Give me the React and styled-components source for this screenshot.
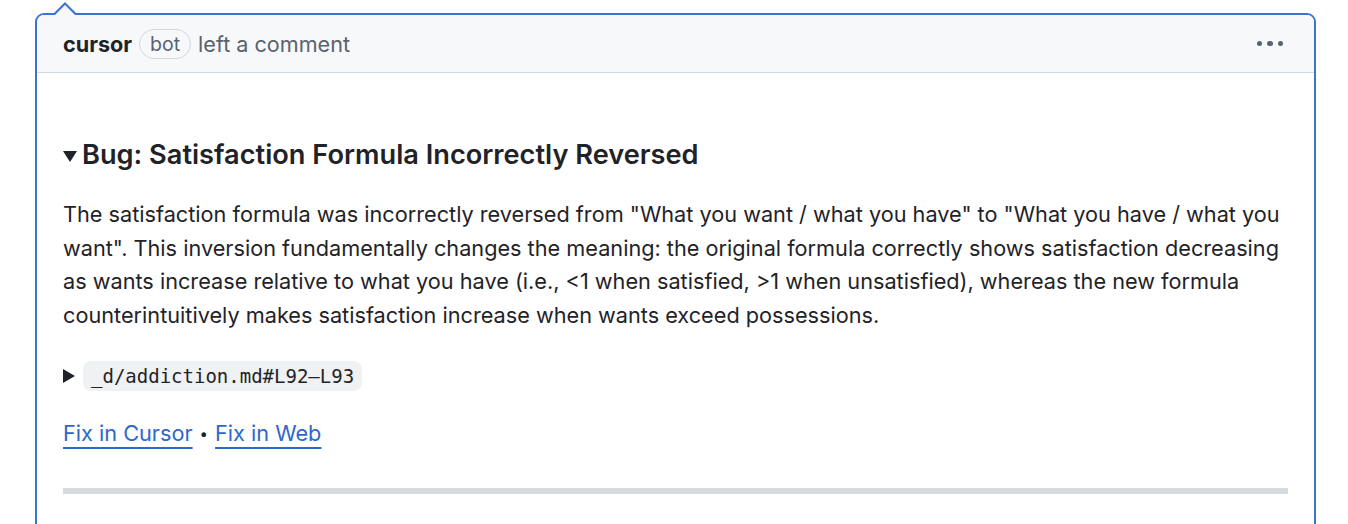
import React from "react";
import styled, { createGlobalStyle } from "styled-components";

const Global = createGlobalStyle`
  html, body { margin: 0; padding: 0; background: #ffffff; }
  body { font-family: Inter, "Noto Sans", sans-serif; color: #1f2328; }
`;

const Page = styled.div`
  padding: 13px 32px 0 35px;
  height: 524px;
  box-sizing: border-box;
  overflow: hidden;
`;

const Card = styled.div`
  position: relative;
  border: 2px solid #3e72d2;
  border-bottom: none;
  border-radius: 9px 9px 0 0;
  background: #ffffff;
  height: 600px;
  &::before, &::after {
    content: "";
    position: absolute;
    left: 17px;
    width: 0; height: 0;
    border-left: 11px solid transparent;
    border-right: 11px solid transparent;
  }
  &::before { top: -13px; border-bottom: 11px solid #3e72d2; }
  &::after { top: -10px; border-bottom: 11px solid #f6f8fa; left: 17px; }
`;

const Header = styled.div`
  display: flex;
  align-items: center;
  height: 57px;
  padding: 0 31px 0 26px;
  background: #f6f8fa;
  border-bottom: 1px solid #d1d9e0;
  border-radius: 7px 7px 0 0;
  font-size: 21.6px;
`;

const Author = styled.span`
  font-weight: 700;
  color: #1f2328;
`;

const Badge = styled.span`
  margin: 1px 7px 0 7px;
  padding: 0 10px;
  height: 30px;
  line-height: 29px;
  box-sizing: border-box;
  border: 1px solid #d1d9e0;
  border-radius: 15px;
  font-size: 19.5px;
  color: #59636e;
`;

const Meta = styled.span`
  color: #59636e;
  flex: 1;
`;

const Dots = styled.div`
  display: flex;
  gap: 5px;
  span { width: 5.5px; height: 5.5px; border-radius: 50%; background: #59636e; }
`;

const Body = styled.div`
  padding: 64px 26px 0 26px;
  font-size: 21.7px;
  line-height: 33.6px;
`;

const Title = styled.h3`
  margin: 0 0 25px;
  font-size: 27.2px;
  font-weight: 600;
  line-height: 36px;
  display: flex;
  align-items: center;
  gap: 5px;
`;

const Caret = styled.span`
  display: inline-block;
  width: 0; height: 0;
  border-left: ${p => (p.open ? "7px solid transparent" : "12px solid #1f2328")};
  border-right: ${p => (p.open ? "7px solid transparent" : "none")};
  border-top: ${p => (p.open ? "11px solid #1f2328" : "7px solid transparent")};
  border-bottom: ${p => (p.open ? "none" : "7px solid transparent")};
  margin-top: ${p => (p.open ? "3px" : "0")};
`;

const Para = styled.p`
  margin: 0 0 29px;
`;

const Summary = styled.div`
  display: flex;
  align-items: center;
  gap: 8px;
  margin-bottom: 26px;
`;

const Code = styled.code`
  font-family: "DejaVu Sans Mono", "Liberation Mono", monospace;
  font-size: 19px;
  background: #eff1f3;
  border-radius: 8px;
  padding: 0 8px;
  line-height: 30px;
`;

const Links = styled.div`
  display: flex;
  align-items: center;
  gap: 7px;
`;

const Link = styled.a`
  color: #2f67c9;
  text-decoration: underline;
  text-underline-offset: 6px;
  text-decoration-thickness: 2px;
`;

const Sep = styled.span`
  font-size: 15px;
  color: #1f2328;
`;

const Rule = styled.div`
  margin-top: 37px;
  height: 6px;
  background: #d5dadf;
`;

export default function App() {
  return (
    <Page>
      <Global />
      <Card>
        <Header>
          <Author>cursor</Author>
          <Badge>bot</Badge>
          <Meta>left a comment</Meta>
          <Dots><span /><span /><span /></Dots>
        </Header>
        <Body>
          <Title><Caret open />Bug: Satisfaction Formula Incorrectly Reversed</Title>
          <Para>
            The satisfaction formula was incorrectly reversed from "What you want / what you have" to "What you have / what you want". This inversion fundamentally changes the meaning: the original formula correctly shows satisfaction decreasing as wants increase relative to what you have (i.e., &lt;1 when satisfied, &gt;1 when unsatisfied), whereas the new formula counterintuitively makes satisfaction increase when wants exceed possessions.
          </Para>
          <Summary><Caret /><Code>_d/addiction.md#L92–L93</Code></Summary>
          <Links>
            <Link href="#">Fix in Cursor</Link>
            <Sep>•</Sep>
            <Link href="#">Fix in Web</Link>
          </Links>
          <Rule />
        </Body>
      </Card>
    </Page>
  );
}
